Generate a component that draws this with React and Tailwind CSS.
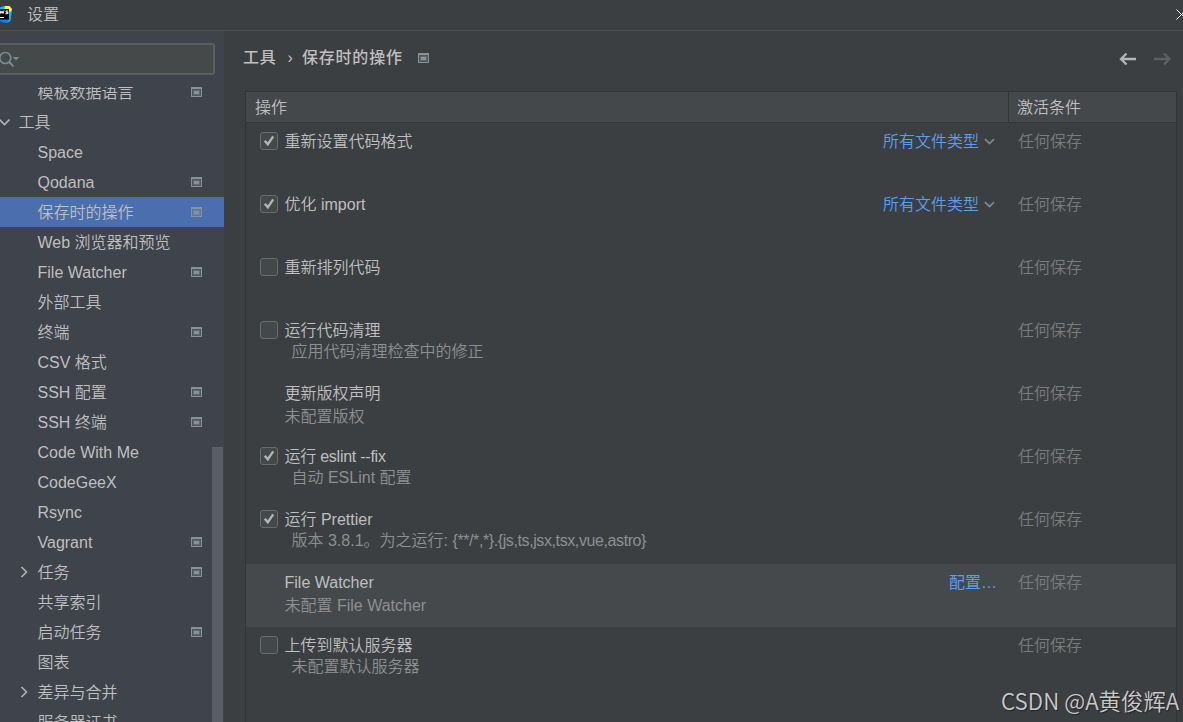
import { clsx } from "clsx";

const treeItems = [
  { label: "模板数据语言", project: true },
  { label: "工具", group: true, open: true },
  { label: "Space" },
  { label: "Qodana", project: true },
  { label: "保存时的操作", project: true, selected: true },
  { label: "Web 浏览器和预览" },
  { label: "File Watcher", project: true },
  { label: "外部工具" },
  { label: "终端", project: true },
  { label: "CSV 格式" },
  { label: "SSH 配置", project: true },
  { label: "SSH 终端", project: true },
  { label: "Code With Me" },
  { label: "CodeGeeX" },
  { label: "Rsync" },
  { label: "Vagrant", project: true },
  { label: "任务", project: true, closed: true },
  { label: "共享索引" },
  { label: "启动任务", project: true },
  { label: "图表" },
  { label: "差异与合并", closed: true },
  { label: "服务器证书" }
];

const actions = [
  { title: "重新设置代码格式", checked: true, fileTypes: true },
  { title: "优化 import", checked: true, fileTypes: true },
  { title: "重新排列代码", checked: false },
  { title: "运行代码清理", checked: false, note: "应用代码清理检查中的修正" },
  { title: "更新版权声明", note: "未配置版权" },
  {
    title: "运行 eslint --fix",
    checked: true,
    note: "自动 ESLint 配置",
    tight: true
  },
  {
    title: "运行 Prettier",
    checked: true,
    note: "版本 3.8.1。为之运行: ",
    pattern: "{**/*,*}.{js,ts,jsx,tsx,vue,astro}"
  },
  { title: "File Watcher", note: "未配置 File Watcher", configure: true },
  { title: "上传到默认服务器", checked: false, note: "未配置默认服务器" }
];

function ProjectIcon({ className }) {
  return (
    <svg
      width="11"
      height="10"
      viewBox="0 0 11 10"
      shapeRendering="crispEdges"
      className={clsx("shrink-0", className)}
    >
      <path
        fill="#87939a"
        fillRule="evenodd"
        d="M0 0h11v10H0zM1 2v7h9V2z"
      />
      <path fill="#87939a" opacity=".25" d="M1 2h9v7H1z" />
      <path fill="#87939a" opacity=".3" d="M2 3h7v5H2z" />
      <path fill="#87939a" d="M3 4h5v3H3z" />
    </svg>
  );
}

function Chevron({ d, width, height, color = "#afb1b3", className }) {
  return (
    <svg
      width={width}
      height={height}
      viewBox={`0 0 ${width} ${height}`}
      fill="none"
      stroke={color}
      strokeWidth="1.7"
      className={clsx("shrink-0", className)}
    >
      <path d={d} />
    </svg>
  );
}

function AppLogo() {
  return (
    <svg
      width="13"
      height="18"
      viewBox="0 0 13 18"
      className="mt-[-2px] shrink-0"
    >
      <path fill="#07c3f2" d="M0 2.500L4 1l8 3-1.500 12-4 2L0 16z" />
      <path fill="#fcf84a" d="M5 1h4.500L12 4l-1.500 3L4 5z" />
      <path fill="#087cfa" d="M0 14h10l-3.500 4L0 16.500z" />
      <path fill="#000" d="M0 4h9v10.500H0z" />
      <path
        d="M0 5.500l.8 3L2 6l1 2.500L4 5.500M8.200 6H6v1.300h2v1.400H5.500"
        fill="none"
        stroke="#fff"
      />
      <path fill="#fff" d="M0 12h4v1H0z" />
    </svg>
  );
}

function Checkbox({ checked }) {
  return (
    <span className="flex h-[18px] w-[18px] shrink-0 items-center justify-center rounded-[3px] border-[1.5px] border-[#6b6b6b] bg-[#43494a]">
      {checked && (
        <svg
          width="14"
          height="14"
          viewBox="0 0 14 14"
          fill="none"
          stroke="#b4b4b4"
          strokeWidth="2.4"
          className="shrink-0"
        >
          <path d="M2.800 6.800l3 3.500 5.400-8" />
        </svg>
      )}
    </span>
  );
}

function TreeItem({ item }) {
  return (
    <div
      className={clsx(
        "flex h-[30px] shrink-0 items-center",
        item.selected && "bg-[#4b6eaf]"
      )}
    >
      <div
        className={clsx(
          "flex shrink-0 items-center",
          item.group ? "w-[18.500px]" : "w-[37.500px]"
        )}
      >
        {item.open && (
          <Chevron
            d="M.5 1.5l5 5 5-5"
            width={11}
            height={8}
            className="-ml-px"
          />
        )}
        {item.closed && (
          <Chevron
            d="M1.5 1l5 5-5 5"
            width={8}
            height={12}
            className="ml-[20px]"
          />
        )}
      </div>
      <span className="grow pt-[2px]">{item.label}</span>
      {item.project && <ProjectIcon className="mr-[22px]" />}
    </div>
  );
}

function Sidebar() {
  return (
    <aside className="flex w-[224px] shrink-0 flex-col bg-[#3f434c]">
      <div className="mt-3 flex h-8 w-[215px] shrink-0 items-center rounded-r-[3px] border-2 border-l-0 border-[#5b5e60] bg-[#45494a]">
        <svg width="20" height="18" viewBox="0 0 20 18" fill="none">
          <circle cx="5.300" cy="8" r="5.500" stroke="#7b8a92" strokeWidth="1.600" />
          <path d="M9.200 12l4.300 4.300" stroke="#7b8a92" strokeWidth="1.900" />
          <path d="M12.800 7h6.400L16 10.600z" fill="#7b8a92" />
        </svg>
      </div>
      <div className="mt-3 flex min-h-0 grow overflow-hidden">
        <div className="-mt-[10px] flex w-[224px] shrink-0 flex-col">
          {treeItems.map((item) => (
            <TreeItem key={item.label} item={item} />
          ))}
        </div>
        <div className="z-10 -ml-3 mt-[360px] w-[11px] shrink-0 bg-[#5b5e66]" />
      </div>
    </aside>
  );
}

function ActionRow({ action }) {
  const hasCheckbox = action.checked !== undefined;

  return (
    <div
      className={clsx(
        "flex h-[63px] shrink-0 leading-[22px]",
        action.configure && "bg-[#46494b]"
      )}
    >
      <div className="flex w-[763px] shrink-0 pt-[8px]">
        <div className="flex w-[38.500px] shrink-0 pt-px pl-[13.500px]">
          {hasCheckbox && <Checkbox checked={action.checked} />}
        </div>
        <div className="grow">
          <p className={clsx(action.tight && "tracking-[-0.25px]")}>
            {action.title}
          </p>
          {action.note && (
            <p
              className={clsx(
                "text-[#8e8f90]",
                hasCheckbox ? "-mt-px pl-[7px]" : "mt-px"
              )}
            >
              {action.note}
              {action.pattern && (
                <span className="tracking-[-0.4px]">{action.pattern}</span>
              )}
            </p>
          )}
        </div>
        {action.fileTypes && (
          <div className="flex h-[22px] items-center pr-[14px] text-[#589df6]">
            所有文件类型
            <Chevron
              d="M1 1.2l4.500 4.300L10 1.2"
              width={11}
              height={8}
              color="#7f8b91"
              className="mb-px ml-[5px]"
            />
          </div>
        )}
        {action.configure && (
          <p className="pr-[12px] text-[#589df6]">
            <span className="font-normal">配置</span>…
          </p>
        )}
      </div>
      <p className="pt-[8px] pl-[9px] text-[#7b7b7b]">任何保存</p>
    </div>
  );
}

function App() {
  return (
    <div className="flex h-[722px] w-[1183px] flex-col overflow-hidden bg-[#3c3f41] font-['Liberation_Sans','Noto_Sans_CJK_SC',sans-serif] text-[16px] leading-[22px] font-[350] text-[#bfbfbf]">
      <header className="flex h-[31px] shrink-0 items-center border-b border-[#515151]">
        <AppLogo />
        <h1 className="ml-[14px] grow">设置</h1>
        <svg
          width="11"
          height="11"
          viewBox="0 0 11 11"
          stroke="#ffffff"
          className="-mr-[4px] mb-[2px] shrink-0"
        >
          <path d="M.5.5l10 10M10.5.5l-10 10" />
        </svg>
      </header>

      <div className="flex min-h-0 grow">
        <Sidebar />

        <main className="flex grow flex-col pl-[21px]">
          <div className="-ml-[2px] flex h-[60px] shrink-0 items-center pb-[7px]">
            <div className="flex grow items-center font-medium">
              <span className="tracking-[0.8px]">工具</span>
              <span className="mr-[9px] ml-[11px]">›</span>
              <span className="tracking-[0.8px]">保存时的操作</span>
              <ProjectIcon className="ml-[15px]" />
            </div>
            <svg
              width="54"
              height="14"
              viewBox="0 0 54 14"
              fill="none"
              strokeWidth="2.3"
              className="mt-[3px] mr-[11px]"
            >
              <path d="M18 7H3M8.500 1.500L3 7l5.500 5.500" stroke="#b4b6b7" />
              <path d="M36 7h15M46 1.500L51.500 7 46 12.500" stroke="#5d6062" />
            </svg>
          </div>

          <section className="flex w-[932px] grow flex-col border-x border-t border-[#323435]">
            <div className="flex h-[31px] shrink-0 items-stretch border-b border-[#323435] bg-[#45484a]">
              <div className="flex w-[763px] items-center border-r border-[#323435] pt-[2px] pl-[9px]">
                操作
              </div>
              <div className="flex items-center pt-[2px] pl-[8px]">
                激活条件
              </div>
            </div>
            {actions.map((action) => (
              <ActionRow key={action.title} action={action} />
            ))}
          </section>
        </main>
      </div>

      <div className="absolute top-[685px] left-[1001px] font-['Noto_Sans_CJK_SC',sans-serif] text-[22.400px] leading-[30px] whitespace-nowrap text-[#c8c9ca] [text-shadow:1px_1px_1px_#222]">
        CSDN @A黄俊辉A
      </div>
    </div>
  );
}

export default App;
